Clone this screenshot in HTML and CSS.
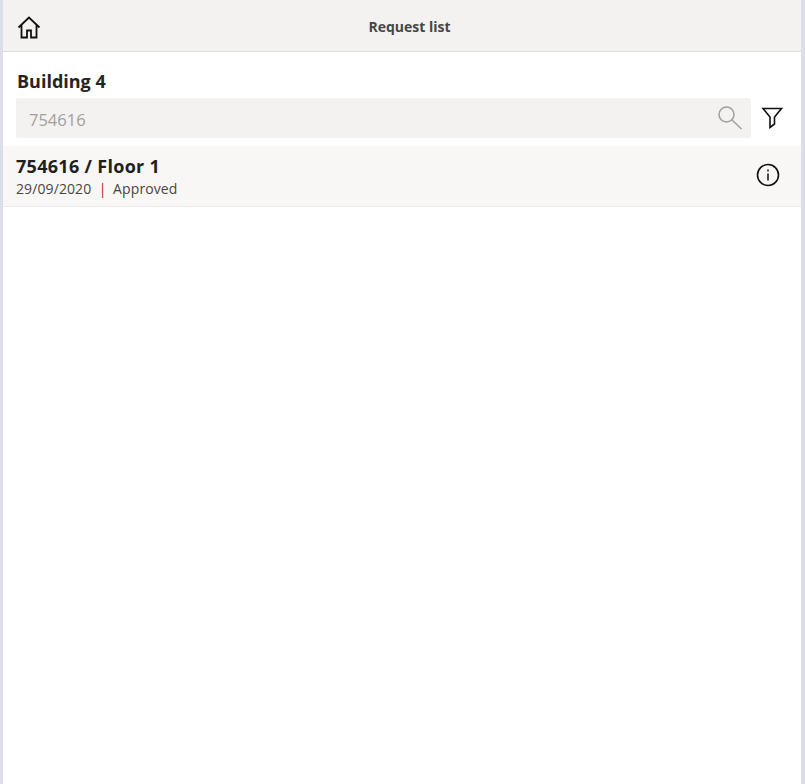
FILE: index.html
```html
<!DOCTYPE html>
<html lang="en">
<head>
  <meta charset="UTF-8">
  <meta name="viewport" content="width=device-width, initial-scale=1.0">
  <title>Request list</title>
  <link rel="stylesheet" href="styles.css">
</head>
<body>
  <div class="app">
    <header class="top-bar">
      <svg class="icon-home" width="24" height="24" viewBox="0 0 24 24" fill="none" stroke="#111" stroke-width="1.8">
        <path d="M1.500 11.500 12 1.500l10.500 10M4.500 9v12.500h5.500v-7h4v7h5.500V9"/>
      </svg>
      <span class="top-title">Request list</span>
    </header>

    <div class="content">
      <h1 class="building">Building 4</h1>
      <div class="search-row">
        <div class="search-box">
          <span class="search-value">754616</span>
          <svg width="26" height="26" viewBox="0 0 26 26" fill="none" stroke="#a19f9d" stroke-width="1.5">
            <circle cx="9.500" cy="9.500" r="7.500"/>
            <path d="M15 15 24.500 24"/>
          </svg>
        </div>
        <svg class="icon-filter" width="22" height="22" viewBox="0 0 22 22" fill="none" stroke="#111" stroke-width="1.6">
          <path d="M2 1.500h18.500l-7 8.500v7l-4.500 3.500V10z"/>
        </svg>
      </div>
    </div>

    <div class="request-row">
      <div class="request-text">
        <div class="request-title">754616 / Floor 1</div>
        <div class="request-meta">29/09/2020<span class="sep">|</span>Approved</div>
      </div>
      <svg class="icon-info" width="24" height="24" viewBox="0 0 24 24" fill="none" stroke="#111">
        <circle cx="12" cy="12" r="10.500" stroke-width="1.600"/>
        <path d="M12 10.500v7M12 6.500v2" stroke-width="1.500"/>
      </svg>
    </div>
  </div>
</body>
</html>
```

FILE: styles.css
```css
html, body {
  height: 100%;
}
body {
  font-family: 'Open Sans', sans-serif;
  margin: 0;
  padding: 0;
  background-color: #fff;
  overflow: hidden;
}
.app {
  height: 100%;
  box-sizing: border-box;
  border-left: 3px solid #dcdcea;
  border-right: 4px solid #dcdcea;
  background-color: #fff;
}
.top-bar {
  display: flex;
  align-items: center;
  justify-content: center;
  position: relative;
  height: 52px;
  box-sizing: border-box;
  padding-top: 2px;
  background-color: #f3f2f1;
  border-bottom: 1px solid #dedcdb;
}
.icon-home {
  position: absolute;
  left: 14px;
  top: 16px;
}
.top-title {
  margin-left: 15px;
  font-size: 14px;
  font-weight: 700;
  color: #484644;
}
.content {
  padding: 19px 18px 0 13px;
}
.building {
  margin: 0 0 6px 1px;
  font-size: 18px;
  line-height: 21px;
  font-weight: 700;
  color: #252423;
}
.search-row {
  display: flex;
  align-items: center;
  justify-content: space-between;
}
.search-box {
  display: flex;
  align-items: center;
  justify-content: space-between;
  width: 735px;
  height: 40px;
  box-sizing: border-box;
  padding: 0 8px 0 13px;
  background-color: #f3f2f1;
  border-radius: 2px;
}
.search-value {
  padding-top: 2px;
  font-size: 16.500px;
  color: #a19f9d;
}
.request-row {
  display: flex;
  align-items: center;
  justify-content: space-between;
  height: 61px;
  box-sizing: border-box;
  margin-top: 8px;
  padding: 0 21px 0 13px;
  background-color: #f8f7f6;
  border-bottom: 1px solid #edebe9;
}
.request-text {
  padding-top: 1px;
}
.request-title {
  font-size: 18px;
  line-height: 22px;
  letter-spacing: 0.3px;
  font-weight: 700;
  color: #201f1e;
}
.request-meta {
  margin-top: 3px;
  font-size: 14px;
  line-height: 18px;
  letter-spacing: 0.1px;
  color: #484644;
}
.sep {
  margin: 0 6.500px 0 7.500px;
  color: #a4262c;
}
.icon-info {
  margin-bottom: 2px;
}
```
